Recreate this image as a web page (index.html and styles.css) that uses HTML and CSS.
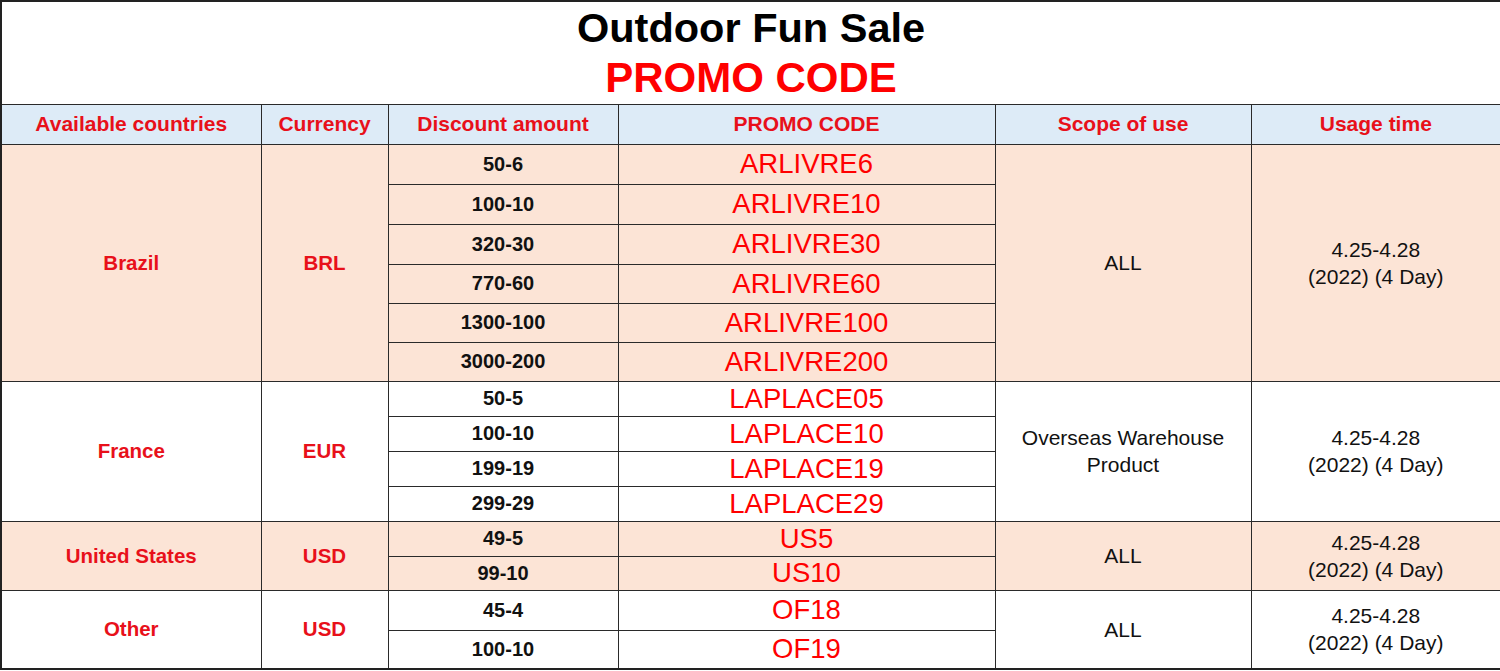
FILE: index.html
```html
<!DOCTYPE html>
<html lang="en">
<head>
<meta charset="utf-8">
<title>Outdoor Fun Sale - Promo Code</title>
<link rel="stylesheet" href="styles.css">
</head>
<body>
<table class="promo">
  <colgroup>
    <col class="c-country">
    <col class="c-cur">
    <col class="c-disc">
    <col class="c-code">
    <col class="c-scope">
    <col class="c-time">
  </colgroup>
  <tr class="r-title">
    <td colspan="6" class="title">
      <div class="t1">Outdoor Fun Sale</div>
      <div class="t2">PROMO CODE</div>
    </td>
  </tr>
  <tr class="r-head">
    <th>Available countries</th>
    <th>Currency</th>
    <th>Discount amount</th>
    <th>PROMO CODE</th>
    <th>Scope of use</th>
    <th>Usage time</th>
  </tr>

  <tr class="peach h40">
    <td rowspan="6" class="country">Brazil</td>
    <td rowspan="6" class="country">BRL</td>
    <td class="disc">50-6</td>
    <td class="code">ARLIVRE6</td>
    <td rowspan="6" class="scope">ALL</td>
    <td rowspan="6" class="scope">4.25-4.28<br>(2022) (4 Day)</td>
  </tr>
  <tr class="peach h40"><td class="disc">100-10</td><td class="code">ARLIVRE10</td></tr>
  <tr class="peach h40"><td class="disc">320-30</td><td class="code">ARLIVRE30</td></tr>
  <tr class="peach h39"><td class="disc">770-60</td><td class="code">ARLIVRE60</td></tr>
  <tr class="peach h39"><td class="disc">1300-100</td><td class="code">ARLIVRE100</td></tr>
  <tr class="peach h39 grp"><td class="disc">3000-200</td><td class="code">ARLIVRE200</td></tr>

  <tr class="white h35">
    <td rowspan="4" class="country">France</td>
    <td rowspan="4" class="country">EUR</td>
    <td class="disc">50-5</td>
    <td class="code">LAPLACE05</td>
    <td rowspan="4" class="scope">Overseas Warehouse<br>Product</td>
    <td rowspan="4" class="scope">4.25-4.28<br>(2022) (4 Day)</td>
  </tr>
  <tr class="white h35"><td class="disc">100-10</td><td class="code">LAPLACE10</td></tr>
  <tr class="white h35"><td class="disc">199-19</td><td class="code">LAPLACE19</td></tr>
  <tr class="white h35"><td class="disc">299-29</td><td class="code">LAPLACE29</td></tr>

  <tr class="peach h35">
    <td rowspan="2" class="country">United States</td>
    <td rowspan="2" class="country">USD</td>
    <td class="disc">49-5</td>
    <td class="code">US5</td>
    <td rowspan="2" class="scope">ALL</td>
    <td rowspan="2" class="scope">4.25-4.28<br>(2022) (4 Day)</td>
  </tr>
  <tr class="peach h34"><td class="disc">99-10</td><td class="code">US10</td></tr>

  <tr class="white h40">
    <td rowspan="2" class="country">Other</td>
    <td rowspan="2" class="country">USD</td>
    <td class="disc">45-4</td>
    <td class="code">OF18</td>
    <td rowspan="2" class="scope">ALL</td>
    <td rowspan="2" class="scope">4.25-4.28<br>(2022) (4 Day)</td>
  </tr>
  <tr class="white h39"><td class="disc">100-10</td><td class="code">OF19</td></tr>
</table>
</body>
</html>
```
FILE: styles.css
```css
html, body {
  margin: 0;
  padding: 0;
  background: #ffffff;
}

body {
  font-family: "Liberation Sans", Arial, sans-serif;
  color: #000;
}

.promo {
  width: 1500px;
  height: 670px;
  border-collapse: collapse;
  table-layout: fixed;
  border: 2px solid #222;
}

.c-country { width: 260px; }
.c-cur { width: 127px; }
.c-disc { width: 230px; }
.c-code { width: 377px; }
.c-scope { width: 256px; }
.c-time { width: 250px; }

.promo td,
.promo th {
  border: 1px solid #2a2a2a;
  padding: 0;
  text-align: center;
  vertical-align: middle;
}

.r-title { height: 103px; }
.title {
  background: #fff;
  padding-top: 2px;
}
.t1 {
  font-weight: bold;
  font-size: 41.5px;
  line-height: 50px;
  color: #000;
}
.t2 {
  font-weight: bold;
  font-size: 42px;
  line-height: 50px;
  color: #ff0000;
}

.r-head { height: 40px; }
.r-head th {
  background: #ddebf7;
  color: #e8101a;
  font-weight: bold;
  font-size: 21px;
}

.h40 { height: 40px; }
.h39 { height: 39px; }
.h35 { height: 35px; }
.h34 { height: 34px; }

.peach td { background: #fce4d6; }
.white td { background: #ffffff; }

.country {
  color: #e8101a;
  font-weight: bold;
  font-size: 20.5px;
}

.disc {
  font-weight: bold;
  font-size: 20px;
  color: #111;
}

.code {
  color: #ff0000;
  font-size: 27.5px;
  line-height: 30px;
}

.scope {
  font-size: 21px;
  line-height: 27px;
  color: #111;
}
```
